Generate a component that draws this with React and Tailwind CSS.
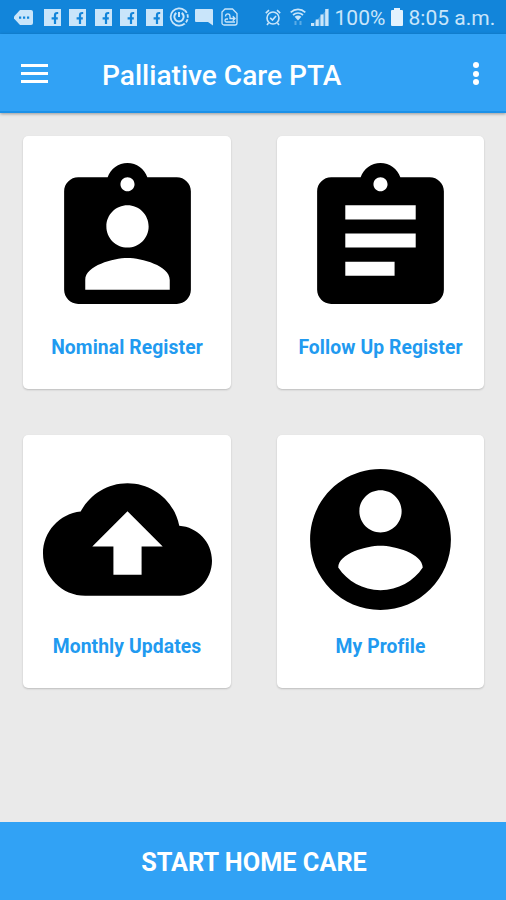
const tiles = [
  {
    label: 'Nominal Register',
    path: 'M19 3h-4.18C14.4 1.84 13.3 1 12 1c-1.3 0-2.4.84-2.82 2H5c-1.1 0-2 .9-2 2v14c0 1.1.9 2 2 2h14c1.1 0 2-.9 2-2V5c0-1.1-.9-2-2-2zm-7 0c.55 0 1 .45 1 1s-.45 1-1 1-1-.45-1-1 .45-1 1-1zm0 4c1.66 0 3 1.34 3 3s-1.34 3-3 3-3-1.34-3-3 1.34-3 3-3zm6 12H6v-1.4c0-2 4-3.1 6-3.1s6 1.1 6 3.1V19z',
  },
  {
    label: 'Follow Up Register',
    path: 'M19 3h-4.18C14.4 1.84 13.3 1 12 1c-1.3 0-2.4.84-2.82 2H5c-1.1 0-2 .9-2 2v14c0 1.1.9 2 2 2h14c1.1 0 2-.9 2-2V5c0-1.1-.9-2-2-2zm-7 0c.55 0 1 .45 1 1s-.45 1-1 1-1-.45-1-1 .45-1 1-1zm2 14H7v-2h7v2zm3-4H7v-2h10v2zm0-4H7V7h10v2z',
  },
  {
    label: 'Monthly Updates',
    path: 'M19.35 10.04C18.67 6.59 15.64 4 12 4 9.11 4 6.6 5.64 5.35 8.04 2.34 8.36 0 10.91 0 14c0 3.31 2.69 6 6 6h13c2.76 0 5-2.24 5-5 0-2.64-2.05-4.78-4.65-4.96zM14 13v4h-4v-4H7l5-5 5 5h-3z',
  },
  {
    label: 'My Profile',
    path: 'M12 2C6.48 2 2 6.48 2 12s4.48 10 10 10 10-4.48 10-10S17.52 2 12 2zm0 3c1.66 0 3 1.34 3 3s-1.34 3-3 3-3-1.34-3-3 1.34-3 3-3zm0 14.2c-2.5 0-4.71-1.28-6-3.22.03-1.99 4-3.08 6-3.08 1.99 0 5.97 1.09 6 3.08-1.29 1.94-3.5 3.22-6 3.22z',
  },
];

const FacebookIcon = () => (
  <svg viewBox="0 0 17 17" className="h-[17px] w-[17px]">
    <path d="M0 0h17v17H0z" fill="currentColor" />
    <path d="M14.2 4h-1c-1.5 0-2.2.8-2.2 2.2V15M7.6 9.4h6.2" fill="none" stroke="#1285da" strokeWidth="2.2" />
  </svg>
);

const StatusBar = () => (
  <div className="flex h-[34px] items-center bg-[#1285da] pl-[14px] text-[#c9e5fa]">
    <svg viewBox="0 0 19 15" className="h-[15px] w-[19px]">
      <path d="M6 0h11a2 2 0 0 1 2 2v11a2 2 0 0 1-2 2H6L0 8.4V6.6z" fill="currentColor" />
      <path d="M5 6.5h2.2v2.2H5zM9 6.5h2.2v2.2H9zM13 6.5h2.2v2.2H13z" fill="#1285da" />
    </svg>
    <div className="ml-[11px] flex gap-[8.4px]">
      {[1, 2, 3, 4, 5].map((n) => (
        <FacebookIcon key={n} />
      ))}
    </div>
    <svg viewBox="0 0 20 20" className="ml-[6px] h-[20px] w-[20px]" fill="none" stroke="currentColor" strokeWidth="1.8">
      <path d="M15.5 3.2A8.6 8.6 0 1 0 15.5 16.8" />
      <path d="M15.5 3.2A8.6 8.6 0 0 1 15.5 16.8" strokeDasharray="3.5 1.5" />
      <path d="M7.3 5.9a4.7 4.7 0 1 0 5.4 0" strokeWidth="2" />
      <path d="M10 5v5" strokeWidth="2" />
    </svg>
    <svg viewBox="0 0 18 17" className="ml-[6px] h-[17px] w-[18px]">
      <path d="M1 0h16a1 1 0 0 1 1 1v15.5L13 13H1a1 1 0 0 1-1-1V1a1 1 0 0 1 1-1z" fill="currentColor" />
    </svg>
    <svg viewBox="0 0 17 18" className="ml-[8px] h-[18px] w-[17px]" fill="none" stroke="currentColor" strokeWidth="1.3">
      <path d="M4 1h7.5L16 5.5V15a2 2 0 0 1-2 2H3a2 2 0 0 1-2-2V4z" />
      <path d="M4.5 8.5C4.5 5 9 5 9 8.5v2h5M11.8 8.3l2.2 2.2-2.2 2.2M14 14H5.5c-2 0-2-3 0-3H7" />
    </svg>

    <svg viewBox="0 0 16 17" className="ml-[27px] h-[17px] w-[16px]" fill="none" stroke="currentColor" strokeWidth="1.6">
      <circle cx="8" cy="9" r="6" />
      <path d="M.8 4.2 4 1.2M15.2 4.2 12 1.2M5.2 8.8l2.3 2.2 3.5-4M3.5 14 2 16M12.5 14l1.5 2" />
    </svg>
    <svg viewBox="0 0 16 18" className="ml-[9px] h-[18px] w-[16px]" fill="none" stroke="currentColor">
      <path d="M.7 4.3C4.9.5 11.1.5 15.3 4.3M3 7c3-2.6 7-2.6 10 0" strokeWidth="1.7" />
      <path d="M4.6 8.7c2-1.7 4.8-1.7 6.8 0L8 12.5z" fill="currentColor" stroke="none" />
      <path d="M5.5 13v4M10.5 13v4" strokeWidth="2" opacity=".4" />
    </svg>
    <svg viewBox="0 0 18 18" className="ml-[5px] h-[18px] w-[18px]" fill="currentColor">
      <path d="M0 15h3v3H0zM4.7 11.5h3V18h-3zM9.5 6.5h3V18h-3zM14.2 1h3.3v17h-3.3z" />
      <path d="M0 18 17.5 0v18z" opacity=".3" />
    </svg>
    <span className="ml-[6px] w-[52px] pt-[2px] text-[21px] leading-none whitespace-nowrap">100%</span>
    <svg viewBox="0 0 12 18" className="ml-[4px] h-[18px] w-[12px]">
      <path d="M3 0h6v2h2a1 1 0 0 1 1 1v14a1 1 0 0 1-1 1H1a1 1 0 0 1-1-1V3a1 1 0 0 1 1-1h2z" fill="#e3f2fd" />
    </svg>
    <span className="ml-[6px] pt-[2px] text-[21px] leading-none whitespace-nowrap">8:05 a.m.</span>
  </div>
);

const Tile = ({ tile }) => (
  <button className="flex h-[253px] flex-col items-center rounded-[5px] bg-white pt-[20px] shadow-[0_1px_2px_rgba(0,0,0,0.2)]">
    <svg viewBox="0 0 24 24" className="h-[169px] w-[169px]" fill="#000">
      <path d={tile.path} />
    </svg>
    <span className="mt-[9px] text-[19.3px] leading-[28px] font-bold tracking-[0.1px] whitespace-nowrap text-[#219af0]">
      {tile.label}
    </span>
  </button>
);

export default function App() {
  return (
    <div className="flex h-[900px] w-[506px] flex-col bg-[#eaeaea] font-['Roboto',sans-serif]">
      <StatusBar />
      <header className="flex h-[79px] items-center border-b-2 border-[#1c91e8] bg-[#31a2f5] pl-[21px] text-white shadow-[0_1px_3px_rgba(0,0,0,0.35)]">
        <button className="mt-px flex w-[27px] flex-col gap-[5px]">
          <span className="h-[3px] bg-white" />
          <span className="h-[3px] bg-white" />
          <span className="h-[3px] bg-white" />
        </button>
        <h1 className="ml-[54px] flex-1 pt-[7px] text-[28.1px] leading-none font-medium">Palliative Care PTA</h1>
        <button className="mt-[2px] mr-[27px] flex flex-col gap-[2.5px]">
          <span className="h-[6px] w-[6px] rounded-full bg-white" />
          <span className="h-[6px] w-[6px] rounded-full bg-white" />
          <span className="h-[6px] w-[6px] rounded-full bg-white" />
        </button>
      </header>

      <main className="grid flex-1 grid-cols-[208px_207px] content-start gap-x-[46px] gap-y-[45.5px] pt-[23px] pl-[23px]">
        {tiles.map((tile) => (
          <Tile key={tile.label} tile={tile} />
        ))}
      </main>

      <button className="h-[78px] bg-[#31a2f5] pt-[3px] pl-[2px] text-[25.3px] font-bold text-white">START HOME CARE</button>
    </div>
  );
}
